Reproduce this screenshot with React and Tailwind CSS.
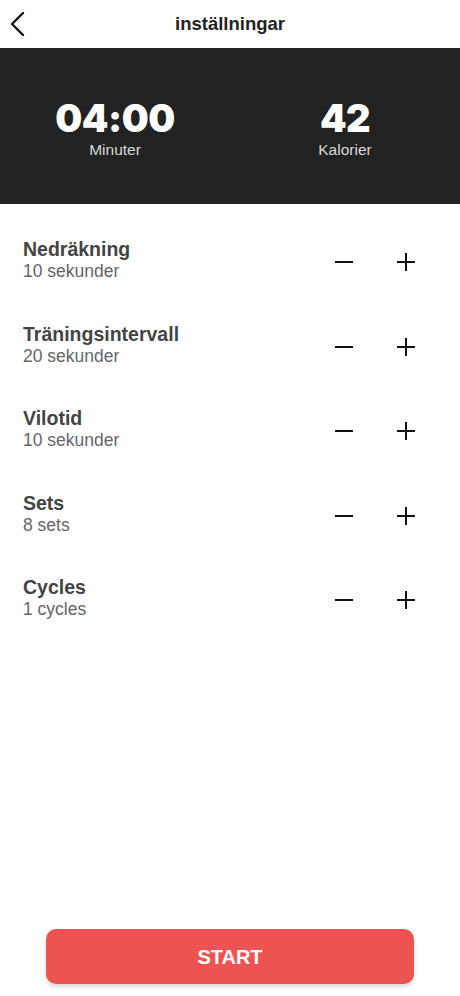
const rows = [
  { title: 'Nedräkning', value: '10 sekunder' },
  { title: 'Träningsintervall', value: '20 sekunder' },
  { title: 'Vilotid', value: '10 sekunder' },
  { title: 'Sets', value: '8 sets' },
  { title: 'Cycles', value: '1 cycles' },
];

const Minus = () => (
  <svg width="20" height="20" viewBox="0 0 20 20">
    <path d="M1 10h18" stroke="#111" strokeWidth="2" />
  </svg>
);

const Plus = () => (
  <svg width="20" height="20" viewBox="0 0 20 20">
    <path d="M1 10h18M10 1v18" stroke="#111" strokeWidth="2" />
  </svg>
);

export default function App() {
  return (
    <div className="w-[460px] h-[996px] bg-white flex flex-col font-['Liberation_Sans',Arial,sans-serif]">
      {/* top bar */}
      <header className="relative h-[48px] flex items-center justify-center">
        <button className="absolute left-[9px] top-[11px]">
          <svg width="18" height="26" viewBox="0 0 18 26">
            <path d="M14 2L3 13l11 11" fill="none" stroke="#111" strokeWidth="2.4" strokeLinecap="round" strokeLinejoin="round" />
          </svg>
        </button>
        <h1 className="text-[18.5px] font-bold text-[#222]">inställningar</h1>
      </header>

      {/* summary */}
      <section className="h-[156px] bg-[#222222] grid grid-cols-2 items-center">
        <div className="flex flex-col items-center pt-[8px]">
          <span className="text-[38px] leading-[40px] font-black text-white tracking-[-0.5px] font-['Inter',sans-serif]">04:00</span>
          <span className="text-[15.5px] text-[#d8d8d8]">Minuter</span>
        </div>
        <div className="flex flex-col items-center pt-[8px]">
          <span className="text-[38px] leading-[40px] font-black text-white tracking-[-0.5px] font-['Inter',sans-serif]">42</span>
          <span className="text-[15.5px] text-[#d8d8d8]">Kalorier</span>
        </div>
      </section>

      {/* settings */}
      <div className="flex flex-col gap-[40.5px] pt-[33px] pl-[23px] pr-[44px]">
        {rows.map((r) => (
          <div key={r.title} className="flex items-center h-[44px]">
            <div className="flex-1 flex flex-col">
              <span className="text-[19.5px] leading-[24px] font-bold text-[#444]">{r.title}</span>
              <span className="text-[17.5px] leading-[20px] text-[#666]">{r.value}</span>
            </div>
            <div className="flex items-center gap-[42px] pt-[6px]">
              <button><Minus /></button>
              <button><Plus /></button>
            </div>
          </div>
        ))}
      </div>

      <div className="flex-1" />

      <div className="px-[46px] pb-[12px]">
        <button className="w-full h-[55px] rounded-[10px] bg-[#ee5353] text-white text-[20px] font-bold shadow-[0_3px_4px_rgba(0,0,0,0.15)]">
          START
        </button>
      </div>
    </div>
  );
}
